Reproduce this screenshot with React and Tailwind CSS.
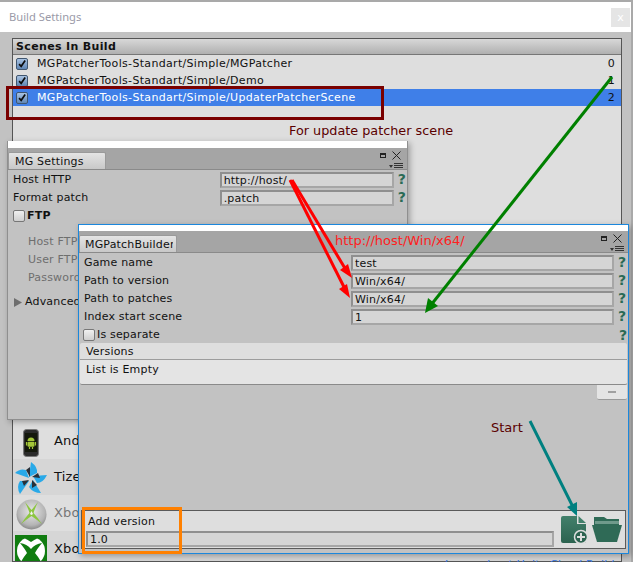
import React from "react";

const font = "font-['DejaVu_Sans',sans-serif] text-[11px] leading-4 tracking-[0.18px] text-[#111]";

const scenes = [
  { name: "MGPatcherTools-Standart/Simple/MGPatcher", index: 0 },
  { name: "MGPatcherTools-Standart/Simple/Demo", index: 1 },
  { name: "MGPatcherTools-Standart/Simple/UpdaterPatcherScene", index: 2, selected: true },
];

function SceneCheck() {
  return (
    <span className="flex h-[12px] w-[12px] shrink-0 items-center justify-center rounded-[2px] border border-[#40566f] bg-gradient-to-b from-[#a9c3e2] to-[#5f86b5]">
      <svg width="12" height="12" viewBox="0 0 12 12">
        <path d="M2.5 6.2 L5 8.8 L9.8 1.8" fill="none" stroke="#0c0c0c" strokeWidth="2" />
      </svg>
    </span>
  );
}

function EmptyCheck() {
  return <span className="h-[12px] w-[12px] shrink-0 rounded-[2px] border border-[#777] bg-gradient-to-b from-[#f0f0f0] to-[#cfcfcf]" />;
}

function Help() {
  return <span className="w-[10px] text-center font-['DejaVu_Sans',sans-serif] text-[14px] font-bold leading-4 text-[#2a6a55]">?</span>;
}

function WindowControls() {
  return (
    <div className="flex w-[24px] flex-col items-end pt-[1px]">
      <div className="mr-[2px] flex items-center gap-[6px]">
        <span className="h-[5px] w-[6px] border border-t-2 border-[#222]" />
        <svg width="9" height="9" viewBox="0 0 9 9">
          <path d="M0.5 0.5 L8.5 8.5 M8.5 0.5 L0.5 8.5" stroke="#222" strokeWidth="1" />
        </svg>
      </div>
      <svg width="14" height="6" viewBox="0 0 14 6" className="mt-[3px]">
        <path d="M0 2 H4 L2 5 Z" fill="#333" />
        <path d="M5 0.5 H14 M5 2.5 H14 M5 4.5 H14" stroke="#333" strokeWidth="1" />
      </svg>
    </div>
  );
}

function Input({ value, className }) {
  return (
    <div className={`h-[16px] shrink-0 border-2 border-[#8f8f8f] border-b-[#a6a6a6] border-r-[#a6a6a6] bg-[#d5d5d5] pl-[2px] text-[11px] leading-[13px] ${className}`}>
      {value}
    </div>
  );
}

function AndroidIcon() {
  return (
    <svg width="16" height="28" viewBox="0 0 16 28">
      <rect x="0.5" y="0.5" width="15" height="27" rx="3" fill="#2b2b2b" stroke="#777" />
      <rect x="2" y="4" width="12" height="19" fill="#14180c" />
      <path d="M4.5 12 a3.5 3.5 0 0 1 7 0 Z" fill="#a4c639" />
      <rect x="4.5" y="12.7" width="7" height="5" rx="1" fill="#a4c639" />
      <path d="M3.5 13 V16.5 M12.5 13 V16.5 M6.5 18 V20 M9.5 18 V20" stroke="#a4c639" strokeWidth="1.2" />
    </svg>
  );
}

function TizenIcon() {
  return (
    <svg width="32" height="33" viewBox="0 0 32 33">
      <path d="M14 15 L16 0 Q23 5 22 11 Z" fill="#29a9e8" />
      <path d="M18 14 L32 13 Q28 21 22 21 Z" fill="#29a9e8" />
      <path d="M18 18 L26 31 Q18 31 14 25 Z" fill="#29a9e8" />
      <path d="M14 19 L5 32 Q1 25 5 19 Z" fill="#29a9e8" />
      <path d="M14 16 L0 11 Q5 6 11 8 Z" fill="#29a9e8" />
      <path d="M15 15 L11 8 L15 5 Z M17 15 L23 11 L25 16 Z M17 18 L22 23 L17 26 Z M14 18 L7 19 L9 24 Z" fill="#2a3038" />
    </svg>
  );
}

function Xbox360Icon() {
  return (
    <svg width="31" height="31" viewBox="0 0 31 31">
      <defs>
        <radialGradient id="sphere" cx="0.5" cy="0.4" r="0.65">
          <stop offset="0" stopColor="#e8e8e8" />
          <stop offset="0.7" stopColor="#b4b4b4" />
          <stop offset="1" stopColor="#7c7c7c" />
        </radialGradient>
      </defs>
      <circle cx="15.5" cy="15.5" r="15" fill="url(#sphere)" />
      <path d="M9 3 Q13 8 15.5 11 Q18 8 22 3 Q19 9 17.5 14 Q22 19 26 25 Q20 20 15.5 17 Q11 20 5 25 Q9 19 13.5 14 Q12 9 9 3 Z" fill="#8cc63f" />
      <path d="M15.5 12 L17 15 L15.5 16 L14 15 Z" fill="#f4f4f4" />
    </svg>
  );
}

function XboxOneIcon() {
  return (
    <svg width="32" height="32" viewBox="0 0 32 32">
      <rect width="32" height="32" fill="#107c10" />
      <circle cx="16" cy="16" r="14" fill="#fff" />
      <path d="M5 8 Q12 9 16 14 Q20 9 27 8 Q22 14 20 18 Q25 24 27 29 L5 29 Q7 24 12 18 Q10 14 5 8 Z" fill="#107c10" />
      <path d="M9 3 Q13 5 16 7 Q19 5 23 3 L16 0 Z" fill="#107c10" />
    </svg>
  );
}

function PlatformRow({ icon, label, muted, shade }) {
  return (
    <div className={`flex h-[36px] shrink-0 items-center ${shade ? "bg-[#d6d6d6]" : "bg-[#dedede]"}`}>
      <div className="flex w-[41px] shrink-0 justify-center pr-[5px] pt-[3px]">{icon}</div>
      <span className={`text-[13px] ${muted ? "text-[#777]" : "text-[#111]"}`}>{label}</span>
    </div>
  );
}

function BuildSettings() {
  return (
    <div className="flex h-full flex-col border-t-2 border-r-2 border-[#a9a9a9] bg-[#c2c2c2]">
      <div className="flex h-[30px] shrink-0 items-center justify-between bg-white pl-[9px] pr-[1px]">
        <span className="font-['Noto_Sans',sans-serif] text-[11.2px] tracking-normal text-[#9a9aa8]">Build Settings</span>
        <span className="flex h-[19px] w-[19px] items-center justify-center bg-[#e5e5e5] text-[11px] leading-none text-white">x</span>
      </div>
      <div className="ml-[12px] mr-[9px] mt-[6px] flex flex-1 flex-col overflow-hidden border border-[#555] bg-[#dedede]">
        <div className="flex h-[16px] shrink-0 items-center border-b border-[#777] bg-gradient-to-b from-[#d8d8d8] to-[#b0b0b0] pl-[3px] font-bold tracking-[0.35px]">
          Scenes In Build
        </div>
        <div className="flex h-[368px] shrink-0 flex-col">
          {scenes.map((s) => (
            <div
              key={s.name}
              className={`flex h-[17px] shrink-0 items-center pl-[3px] pr-[6px] ${s.selected ? "bg-[#3f7fe8] text-white" : ""}`}
            >
              <SceneCheck />
              <span className="ml-[9px] flex-1 tracking-[0.32px]">{s.name}</span>
              <span className="text-[#111]">{s.index}</span>
            </div>
          ))}
        </div>
        <PlatformRow icon={<AndroidIcon />} label="Android" />
        <PlatformRow icon={<TizenIcon />} label="Tizen" shade />
        <PlatformRow icon={<Xbox360Icon />} label="Xbox 360" muted />
        <PlatformRow icon={<XboxOneIcon />} label="Xbox One" shade />
      </div>
    </div>
  );
}

function MGSettings() {
  return (
    <div className="absolute left-[7px] top-[141px] flex h-[279px] w-[401px] flex-col border-r border-b border-l border-[#8f8f8f] bg-[#c2c2c2] shadow-[2px_2px_6px_rgba(0,0,0,0.3)]">
      <div className="h-[7px] bg-white" />
      <div className="flex h-[22px] items-end justify-between border-b border-[#8a8a8a] bg-[#a5a5a5] pr-[4px]">
        <div className="h-[17px] w-[98px] rounded-t-[2px] border border-b-0 border-[#9a9a9a] bg-gradient-to-b from-[#e4e4e4] to-[#c8c8c8] pl-[6px] leading-[17px]">
          MG Settings
        </div>
        <div className="self-start pt-[2px]">
          <WindowControls />
        </div>
      </div>
      <div className="flex flex-col pl-[5px] pr-[1px] pt-[1px]">
        <div className="flex h-[18px] items-center">
          <span className="w-[209px]">Host HTTP</span>
          <Input value="http://host/" className="w-[174px]" />
          <span className="ml-[4px]"><Help /></span>
        </div>
        <div className="flex h-[18px] items-center">
          <span className="w-[209px]">Format patch</span>
          <Input value=".patch" className="w-[174px]" />
          <span className="ml-[4px]"><Help /></span>
        </div>
        <div className="flex h-[18px] items-center gap-[2px]">
          <EmptyCheck />
          <span className="font-bold">FTP</span>
        </div>
        <div className="mt-[9px] flex flex-col pl-[15px] text-[#6e6e6e]">
          <span className="h-[18px]">Host FTP</span>
          <span className="h-[18px]">User FTP</span>
          <span className="h-[18px]">Password</span>
        </div>
        <div className="mt-[6px] flex items-center gap-[3px] pl-[1px]">
          <svg width="8" height="9" viewBox="0 0 8 9">
            <path d="M0 0 L8 4.5 L0 9 Z" fill="#6e6e6e" />
          </svg>
          <span>Advanced</span>
        </div>
      </div>
    </div>
  );
}

const builderFields = [
  { label: "Game name", value: "test" },
  { label: "Path to version", value: "Win/x64/" },
  { label: "Path to patches", value: "Win/x64/" },
  { label: "Index start scene", value: "1" },
];

function AddIcon() {
  return (
    <svg width="27" height="29" viewBox="0 0 27 29">
      <defs>
        <linearGradient id="fileFill" x1="0" y1="0" x2="0" y2="1">
          <stop offset="0" stopColor="#42806b" />
          <stop offset="1" stopColor="#2c6350" />
        </linearGradient>
      </defs>
      <path d="M2 1 H16 V9 H25 V27 Q25 28 23 28 H2 Q0 28 0 26 V3 Q0 1 2 1 Z" fill="url(#fileFill)" />
      <path d="M17.5 1 L25 8 H17.5 Z" fill="#42806b" />
      <circle cx="20" cy="22" r="6.5" fill="#2c6350" stroke="#dedede" strokeWidth="1.5" />
      <path d="M20 18 V26 M16 22 H24" stroke="#dedede" strokeWidth="2" />
    </svg>
  );
}

function FolderIcon() {
  return (
    <svg width="31" height="26" viewBox="0 0 31 26">
      <path d="M2 0 H12 L15 2 H27 V8 H2 Z" fill="#2f6a56" />
      <path d="M3 4 H27 V7 H3 Z" fill="#6f9a8b" />
      <path d="M0 8 H30 L25 25 H5 Z" fill="#2f6a56" />
    </svg>
  );
}

function MGPatchBuilder() {
  return (
    <div className="absolute left-[78px] top-[224px] flex h-[330px] w-[551px] flex-col border border-[#1b87dc] bg-[#c2c2c2] shadow-[2px_2px_6px_rgba(0,0,0,0.3)]">
      <div className="h-[6px] shrink-0 bg-white" />
      <div className="flex h-[22px] shrink-0 items-end justify-between border-b border-[#8a8a8a] bg-[#a5a5a5] pr-[4px]">
        <div className="h-[17px] w-[98px] overflow-hidden whitespace-nowrap rounded-t-[2px] border border-b-0 border-[#9a9a9a] bg-gradient-to-b from-[#e4e4e4] to-[#c8c8c8] pl-[5px] leading-[17px]">
          <span className="block w-[88px] overflow-hidden">MGPatchBuilder</span>
        </div>
        <div className="self-start pt-[2px]">
          <WindowControls />
        </div>
      </div>
      <div className="flex flex-col pl-[5px] pt-[1px]">
        {builderFields.map((f) => (
          <div key={f.label} className="flex h-[18px] items-center">
            <span className="w-[267px]">{f.label}</span>
            <Input value={f.value} className="w-[263px]" />
            <span className="ml-[4px]"><Help /></span>
          </div>
        ))}
        <div className="-ml-[1px] flex h-[18px] items-center">
          <EmptyCheck />
          <span className="ml-[2px] w-[524px]">Is separate</span>
          <Help />
        </div>
      </div>
      <div className="-mt-[1px] ml-[1px] w-[547px]">
        <div className="flex h-[17px] items-center rounded-t-[2px] border-b border-[#9c9c9c] bg-[#dedede] pl-[6px] pt-[1px]">Versions</div>
        <div className="flex h-[25px] items-start rounded-b-[2px] border-b border-[#8a8a8a] bg-[#e4e4e4] pl-[6px] pt-[2px]">List is Empty</div>
        <div className="flex justify-end">
          <div className="flex h-[15px] w-[30px] items-center justify-center rounded-b-[2px] border-b border-[#9a9a9a] bg-[#e4e4e4]">
            <span className="h-[2px] w-[8px] bg-[#a0a0a0]" />
          </div>
        </div>
      </div>
      <div className="ml-[2px] mt-[110px] flex h-[39px] w-[545px] items-center border border-[#5a5a5a] bg-[#dedede] pl-[4px]">
        <div className="flex w-[468px] flex-col pt-[2px]">
          <span className="pl-[2px] leading-[15px]">Add version</span>
          <Input value="1.0" className="mt-[2px] w-[468px]" />
        </div>
        <div className="ml-[7px] flex items-center gap-[4px]">
          <AddIcon />
          <FolderIcon />
        </div>
      </div>
    </div>
  );
}

function Annotations() {
  return (
    <svg width="633" height="562" viewBox="0 0 633 562" className="pointer-events-none absolute inset-0">
      <line x1="292" y1="180" x2="346" y2="270" stroke="#ff0000" strokeWidth="3" />
      <path d="M352 278 L340 270 L348 264 Z" fill="#ff0000" />
      <line x1="290" y1="180" x2="345" y2="289" stroke="#ff0000" strokeWidth="3" />
      <path d="M350 298 L339 289 L347 284 Z" fill="#ff0000" />
      <line x1="612" y1="77" x2="431" y2="305" stroke="#008000" strokeWidth="3" />
      <path d="M425 313 L428 298 L438 306 Z" fill="#008000" />
      <line x1="530" y1="421" x2="573" y2="507" stroke="#008080" strokeWidth="3" />
      <path d="M577 516 L567 507 L577 502 Z" fill="#008080" />
    </svg>
  );
}

export default function App() {
  return (
    <div className={`relative h-[562px] w-[633px] overflow-hidden bg-[#c2c2c2] ${font}`}>
      <BuildSettings />
      <MGSettings />
      <MGPatchBuilder />
      <Annotations />

      {/* red and orange marks drawn over the windows */}
      <div className="absolute left-[6px] top-[86px] h-[34px] w-[378px] border-[3px] border-[#7a0000]" />
      <div className="absolute left-[82px] top-[507px] h-[47px] w-[100px] border-[3px] border-[#ff8000]" />

      <span className="absolute left-[289px] top-[123px] text-[12.8px] tracking-normal text-[#5a0000]">For update patcher scene</span>
      <span className="absolute left-[335px] top-[233px] text-[13px] tracking-normal text-[#ff2020]">http://host/Win/x64/</span>
      <span className="absolute left-[491px] top-[420px] text-[13px] tracking-normal text-[#5a0000]">Start</span>
      <span className="absolute left-[445px] top-[557px] text-[#2f6fd8]">Learn about Unity Cloud Build</span>
    </div>
  );
}
